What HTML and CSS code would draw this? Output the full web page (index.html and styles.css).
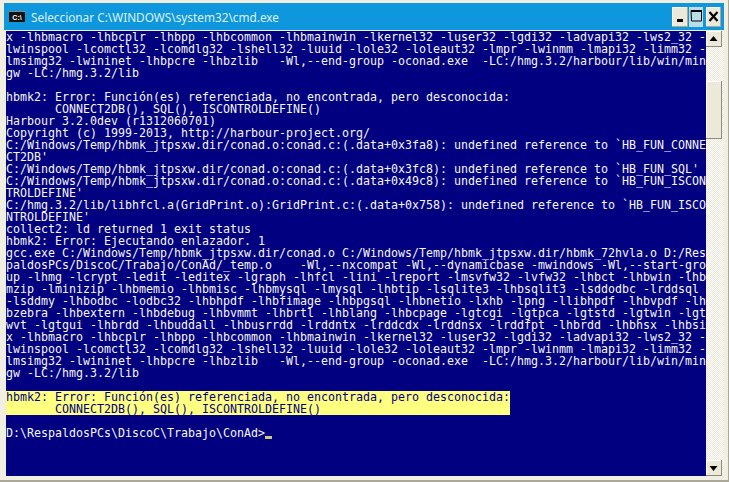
FILE: index.html
```html
<!DOCTYPE html>
<html lang="es">
<head>
<meta charset="utf-8">
<title>cmd.exe</title>
<link rel="stylesheet" href="styles.css">
</head>
<body>
<div class="window">
  <header class="titlebar">
    <div class="app-icon"><span class="app-icon-text">C:\</span></div>
    <div class="title">Seleccionar C:\WINDOWS\system32\cmd.exe</div>
    <div class="controls">
      <button class="ctl ctl-min"><svg width="16" height="20" viewBox="0 0 16 20"><rect x="5" y="12" width="6" height="3" fill="#000"/></svg></button>
      <button class="ctl ctl-max"><svg width="14" height="20" viewBox="0 0 14 20"><path d="M2 3.5h10.5v10.5H2.5z" fill="none" stroke="#000" stroke-width="1"/><rect x="2" y="3" width="11" height="2" fill="#000"/></svg></button>
      <button class="ctl ctl-close"><svg width="15" height="20" viewBox="0 0 15 20"><path d="M3.5 5l8 9M11.5 5l-8 9" fill="none" stroke="#000" stroke-width="2.2"/></svg></button>
    </div>
  </header>
  <div class="client">
    <main class="console">
<div class="line">x -lhbmacro -lhbcplr -lhbpp -lhbcommon -lhbmainwin -lkernel32 -luser32 -lgdi32 -ladvapi32 -lws2_32 -</div>
<div class="line">lwinspool -lcomctl32 -lcomdlg32 -lshell32 -luuid -lole32 -loleaut32 -lmpr -lwinmm -lmapi32 -limm32 -</div>
<div class="line">lmsimg32 -lwininet -lhbpcre -lhbzlib   -Wl,--end-group -oconad.exe  -LC:/hmg.3.2/harbour/lib/win/min</div>
<div class="line">gw -LC:/hmg.3.2/lib</div>
<div class="line"></div>
<div class="line">hbmk2: Error: Función(es) referenciada, no encontrada, pero desconocida:</div>
<div class="line">       CONNECT2DB(), SQL(), ISCONTROLDEFINE()</div>
<div class="line">Harbour 3.2.0dev (r1312060701)</div>
<div class="line">Copyright (c) 1999-2013, http://harbour-project.org/</div>
<div class="line">C:/Windows/Temp/hbmk_jtpsxw.dir/conad.o:conad.c:(.data+0x3fa8): undefined reference to `HB_FUN_CONNE</div>
<div class="line">CT2DB'</div>
<div class="line">C:/Windows/Temp/hbmk_jtpsxw.dir/conad.o:conad.c:(.data+0x3fc8): undefined reference to `HB_FUN_SQL'</div>
<div class="line">C:/Windows/Temp/hbmk_jtpsxw.dir/conad.o:conad.c:(.data+0x49c8): undefined reference to `HB_FUN_ISCON</div>
<div class="line">TROLDEFINE'</div>
<div class="line">C:/hmg.3.2/lib/libhfcl.a(GridPrint.o):GridPrint.c:(.data+0x758): undefined reference to `HB_FUN_ISCO</div>
<div class="line">NTROLDEFINE'</div>
<div class="line">collect2: ld returned 1 exit status</div>
<div class="line">hbmk2: Error: Ejecutando enlazador. 1</div>
<div class="line">gcc.exe C:/Windows/Temp/hbmk_jtpsxw.dir/conad.o C:/Windows/Temp/hbmk_jtpsxw.dir/hbmk_72hvla.o D:/Res</div>
<div class="line">paldosPCs/DiscoC/Trabajo/ConAd/_temp.o    -Wl,--nxcompat -Wl,--dynamicbase -mwindows -Wl,--start-gro</div>
<div class="line">up -lhmg -lcrypt -ledit -leditex -lgraph -lhfcl -lini -lreport -lmsvfw32 -lvfw32 -lhbct -lhbwin -lhb</div>
<div class="line">mzip -lminizip -lhbmemio -lhbmisc -lhbmysql -lmysql -lhbtip -lsqlite3 -lhbsqlit3 -lsddodbc -lrddsql </div>
<div class="line">-lsddmy -lhbodbc -lodbc32 -lhbhpdf -lhbfimage -lhbpgsql -lhbnetio -lxhb -lpng -llibhpdf -lhbvpdf -lh</div>
<div class="line">bzebra -lhbextern -lhbdebug -lhbvmmt -lhbrtl -lhblang -lhbcpage -lgtcgi -lgtpca -lgtstd -lgtwin -lgt</div>
<div class="line">wvt -lgtgui -lhbrdd -lhbuddall -lhbusrrdd -lrddntx -lrddcdx -lrddnsx -lrddfpt -lhbrdd -lhbhsx -lhbsi</div>
<div class="line">x -lhbmacro -lhbcplr -lhbpp -lhbcommon -lhbmainwin -lkernel32 -luser32 -lgdi32 -ladvapi32 -lws2_32 -</div>
<div class="line">lwinspool -lcomctl32 -lcomdlg32 -lshell32 -luuid -lole32 -loleaut32 -lmpr -lwinmm -lmapi32 -limm32 -</div>
<div class="line">lmsimg32 -lwininet -lhbpcre -lhbzlib   -Wl,--end-group -oconad.exe  -LC:/hmg.3.2/harbour/lib/win/min</div>
<div class="line">gw -LC:/hmg.3.2/lib</div>
<div class="line"></div>
<div class="line line-selected">hbmk2: Error: Función(es) referenciada, no encontrada, pero desconocida:</div>
<div class="line line-selected">       CONNECT2DB(), SQL(), ISCONTROLDEFINE()</div>
<div class="line"></div>
<div class="line">D:\RespaldosPCs\DiscoC\Trabajo\ConAd&gt;<span class="cursor"></span></div>
    </main>
    <aside class="scrollbar">
      <div class="sb-btn"><svg width="15" height="16" viewBox="0 0 15 16"><path d="M7.5 5L3.5 10h8z" fill="#000"/></svg></div>
      <div class="sb-space-top"></div>
      <div class="sb-thumb"></div>
      <div class="sb-space-bottom"></div>
      <div class="sb-btn"><svg width="15" height="16" viewBox="0 0 15 16"><path d="M3.5 6h8l-4 5z" fill="#000"/></svg></div>
    </aside>
  </div>
</div>
</body>
</html>
```
FILE: styles.css
```css
html, body {
  margin: 0;
  padding: 0;
  background: #e6e3d4;
}
.window {
  box-sizing: border-box;
  width: 729px;
  height: 482px;
  padding: 3px 4px 4px 4px;
  display: flex;
  flex-direction: column;
  background: #f1efe3;
  border-right: 1px solid #aca899;
  border-bottom: 2px solid #aca899;
  overflow: hidden;
}
.titlebar {
  height: 27px;
  flex: none;
  display: flex;
  align-items: center;
  background: #0e97dd;
  padding: 0 3px 0 5px;
}
.app-icon {
  width: 16px;
  height: 10px;
  flex: none;
  background: #111;
  border-top: 1px solid #888;
  display: flex;
  align-items: center;
  justify-content: center;
  overflow: hidden;
}
.app-icon-text {
  color: #fff;
  font: bold 7px/9px "Liberation Sans", sans-serif;
}
.title {
  margin-left: 6px;
  flex: 1;
  color: #dff2fc;
  font: 11.8px/16px "Noto Sans", sans-serif;
  white-space: nowrap;
}
.controls {
  display: flex;
  align-items: center;
}
.ctl {
  height: 20px;
  padding: 0;
  border: 0;
  background: #ece9d8;
  box-shadow: inset -1px -1px 0 #aca899, inset 1px 1px 0 #fff;
  display: block;
}
.ctl svg { display: block; }
.ctl-min { width: 16px; margin-right: 1px; }
.ctl-max { width: 14px; margin-right: 3px; background: #bcdde6; box-shadow: none; }
.ctl-close { width: 15px; }
.client {
  flex: 1;
  min-height: 0;
  margin-top: 1px;
  padding-left: 2px;
  display: flex;
}
.console {
  width: 700px;
  flex: none;
  background: #000080;
  color: #f7f7f7;
  font-family: "DejaVu Sans Mono", monospace;
  font-size: 11.63px;
  line-height: 12px;
  overflow: hidden;
}
.line {
  height: 12px;
  white-space: pre;
}
.line-selected {
  width: 504px;
  background: #ffff80;
  color: #000080;
}
.cursor {
  display: inline-block;
  width: 7px;
  height: 3px;
  vertical-align: -2px;
  background: #c8cc7a;
}
.scrollbar {
  flex: 1;
  display: flex;
  flex-direction: column;
  background: repeating-conic-gradient(#fff 0 25%, #ece9d8 0 50%) 0 0 / 2px 2px;
}
.sb-btn {
  height: 16px;
  flex: none;
  margin-right: 2px;
  background: #ece9d8;
  box-shadow: inset -1px -1px 0 #8d8b7f, inset 1px 1px 0 #fff;
}
.sb-btn svg { display: block; }
.sb-space-top { height: 34px; flex: none; }
.sb-thumb {
  height: 58px;
  flex: none;
  margin-right: 2px;
  background: #ece9d8;
  box-shadow: inset -1px -1px 0 #8d8b7f, inset 1px 1px 0 #fff;
}
.sb-space-bottom { flex: 1; }
```
